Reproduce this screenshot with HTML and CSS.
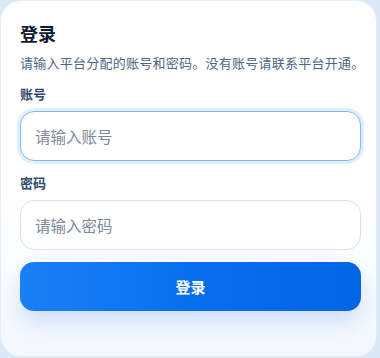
FILE: index.html
```html
<!DOCTYPE html>
<html lang="zh-CN">
<head>
    <meta charset="utf-8" />
    <title>登录</title>
    <link rel="stylesheet" href="styles.css">
</head>
<body>

<div class="loginBox">
    <form class="loginForm" onsubmit="return false;">
        <h1 class="loginTitle">登录</h1>
        <p class="loginMessage">请输入平台分配的账号和密码。没有账号请联系平台开通。</p>

        <label for="username">账号</label>
        <input type="text" class="text focused" id="username" placeholder="请输入账号" />

        <label for="password">密码</label>
        <input type="password" class="text" id="password" placeholder="请输入密码" />

        <button type="submit" class="login">登录</button>
    </form>
</div>

</body>
</html>
```

FILE: styles.css
```css
    html, body, form {
        margin: 0;
        padding: 0;
        }
    html {
        font-family: "Noto Sans CJK SC", "Noto Sans", sans-serif;
        color: #0f1d33;
        }
    body {
        width: 380px;
        height: 358px;
        overflow: hidden;
        background: #dbe8f8;
        }
    .loginBox {
        box-sizing: border-box;
        width: 375px;
        height: 355px;
        margin: 1px 0 0 1px;
        padding: 19px 19px 0;
        border-radius: 20px;
        background: linear-gradient(180deg, #ffffff 55%, #f4f8fe 100%);
        box-shadow: 0 0 0 1px #e4edf9;
        }
    .loginForm {
        display: flex;
        flex-direction: column;
        }
    .loginTitle {
        margin: 0;
        font-size: 18px;
        line-height: 26px;
        font-weight: bold;
        color: #0d1a30;
        }
    .loginMessage {
        margin: 7px 0 0;
        font-size: 13px;
        line-height: 20px;
        white-space: nowrap;
        letter-spacing: 0.25px;
        color: #4f6585;
        }
    label {
        display: block;
        margin: 12px 0 8px;
        font-size: 13px;
        line-height: 18px;
        font-weight: 600;
        color: #2f4a6e;
        }
    input.text {
        box-sizing: border-box;
        width: 341px;
        height: 50px;
        margin: 0 0 1px;
        padding: 0 14px;
        border: 1px solid #d6e2f3;
        border-radius: 14px;
        background: #fff;
        font-family: inherit;
        font-size: 15.5px;
        color: #333;
        outline: none;
        }
    input.text::placeholder {
        color: #7d8899;
        }
    input.focused {
        border-color: #7fbaf3;
        box-shadow: 0 0 0 3px #e2f0fd;
        }
    button.login {
        width: 341px;
        height: 49px;
        margin-top: 11px;
        border: 0;
        border-radius: 14px;
        background: linear-gradient(90deg, #1a7ff6 0%, #0a6fee 50%, #0064e6 100%);
        color: #fff;
        font-family: inherit;
        font-size: 15px;
        font-weight: bold;
        box-shadow: 0 12px 22px rgba(30, 110, 230, 0.18);
        }
```
